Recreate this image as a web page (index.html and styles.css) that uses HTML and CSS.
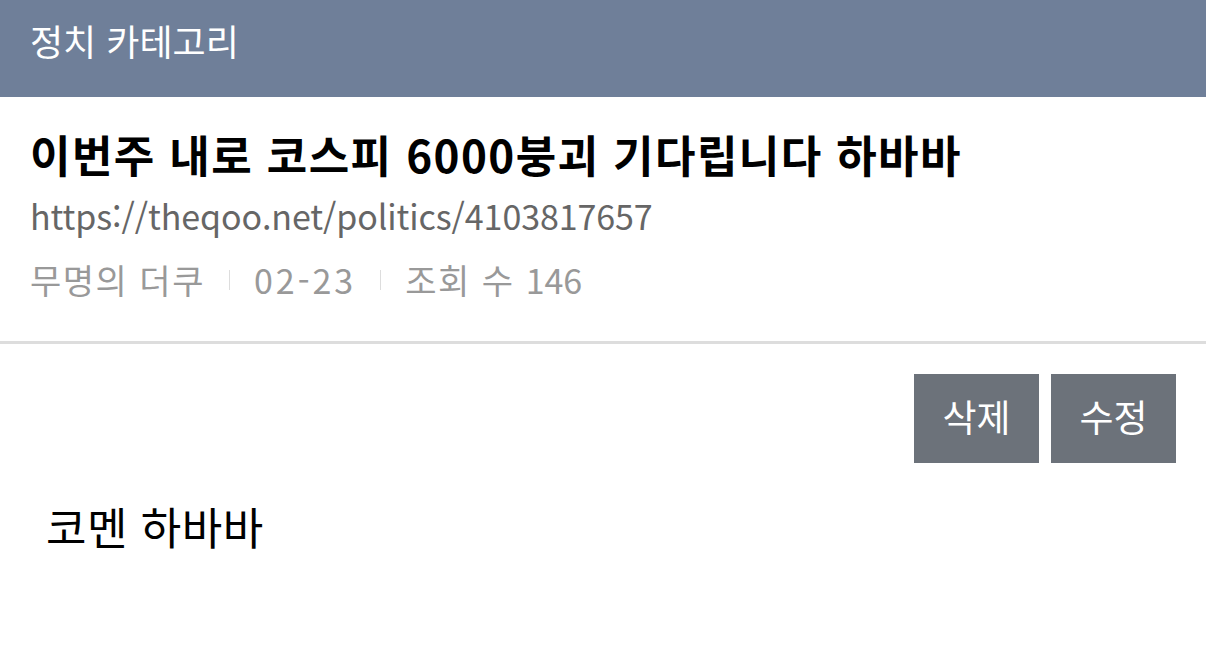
FILE: index.html
```html
<!DOCTYPE html>
<html lang="ko">
<head>
  <meta charset="UTF-8">
  <meta name="viewport" content="width=device-width, initial-scale=1.0">
  <title>정치 카테고리</title>
  <link rel="stylesheet" href="styles.css">
</head>
<body>
  <header class="cate-bar">정치 카테고리</header>

  <div class="post-head">
    <h1 class="post-title">이번주 내로 코스피 6000붕괴 기다립니다 하바바</h1>
    <div class="post-url">https://theqoo.net/politics/4103817657</div>
    <div class="post-meta">
      <span>무명의 더쿠</span>
      <span class="sep"></span>
      <span class="num">02-23</span>
      <span class="sep"></span>
      <span>조회 수 <span class="count">146</span></span>
    </div>
  </div>

  <div class="post-actions">
    <button class="btn">삭제</button>
    <button class="btn">수정</button>
  </div>

  <div class="post-body">코멘 하바바</div>
</body>
</html>
```

FILE: styles.css
```css
body {
  margin: 0;
  font-family: "Noto Sans CJK KR", "Noto Sans", sans-serif;
  background: #fff;
  color: #000;
}

.cate-bar {
  height: 97px;
  background-color: #6f7f99;
  color: #fff;
  font-size: 36px;
  line-height: 80px;
  padding-left: 30px;
}

.post-head {
  padding: 25px 30px 0;
  height: 219px;
  border-bottom: 3px solid #dddddd;
  box-sizing: content-box;
}

.post-title {
  margin: 0;
  font-size: 44px;
  font-weight: 700;
  line-height: 64px;
  letter-spacing: 1.4px;
}

.post-url {
  font-size: 34px;
  color: #666;
  line-height: 44px;
  margin-top: 8px;
  letter-spacing: -0.1px;
}

.post-meta {
  display: flex;
  align-items: center;
  font-size: 34px;
  color: #999;
  line-height: 44px;
  margin-top: 20px;
  letter-spacing: 1.5px;
}

.post-meta .num {
  letter-spacing: 3px;
}

.post-meta .count {
  letter-spacing: 0;
}

.sep {
  width: 1px;
  height: 20px;
  background: #ddd;
  margin: 0 24px;
}

.post-actions {
  display: flex;
  justify-content: flex-end;
  gap: 12px;
  padding: 30px 30px 0;
}

.btn {
  width: 125px;
  height: 89px;
  border: none;
  background-color: #6c727a;
  color: #fff;
  font-family: inherit;
  font-size: 37px;
  padding: 0 0 5px;
  cursor: pointer;
}

.post-body {
  padding: 28px 46px;
  font-size: 44px;
  line-height: 70px;
  letter-spacing: 0.5px;
}
```
